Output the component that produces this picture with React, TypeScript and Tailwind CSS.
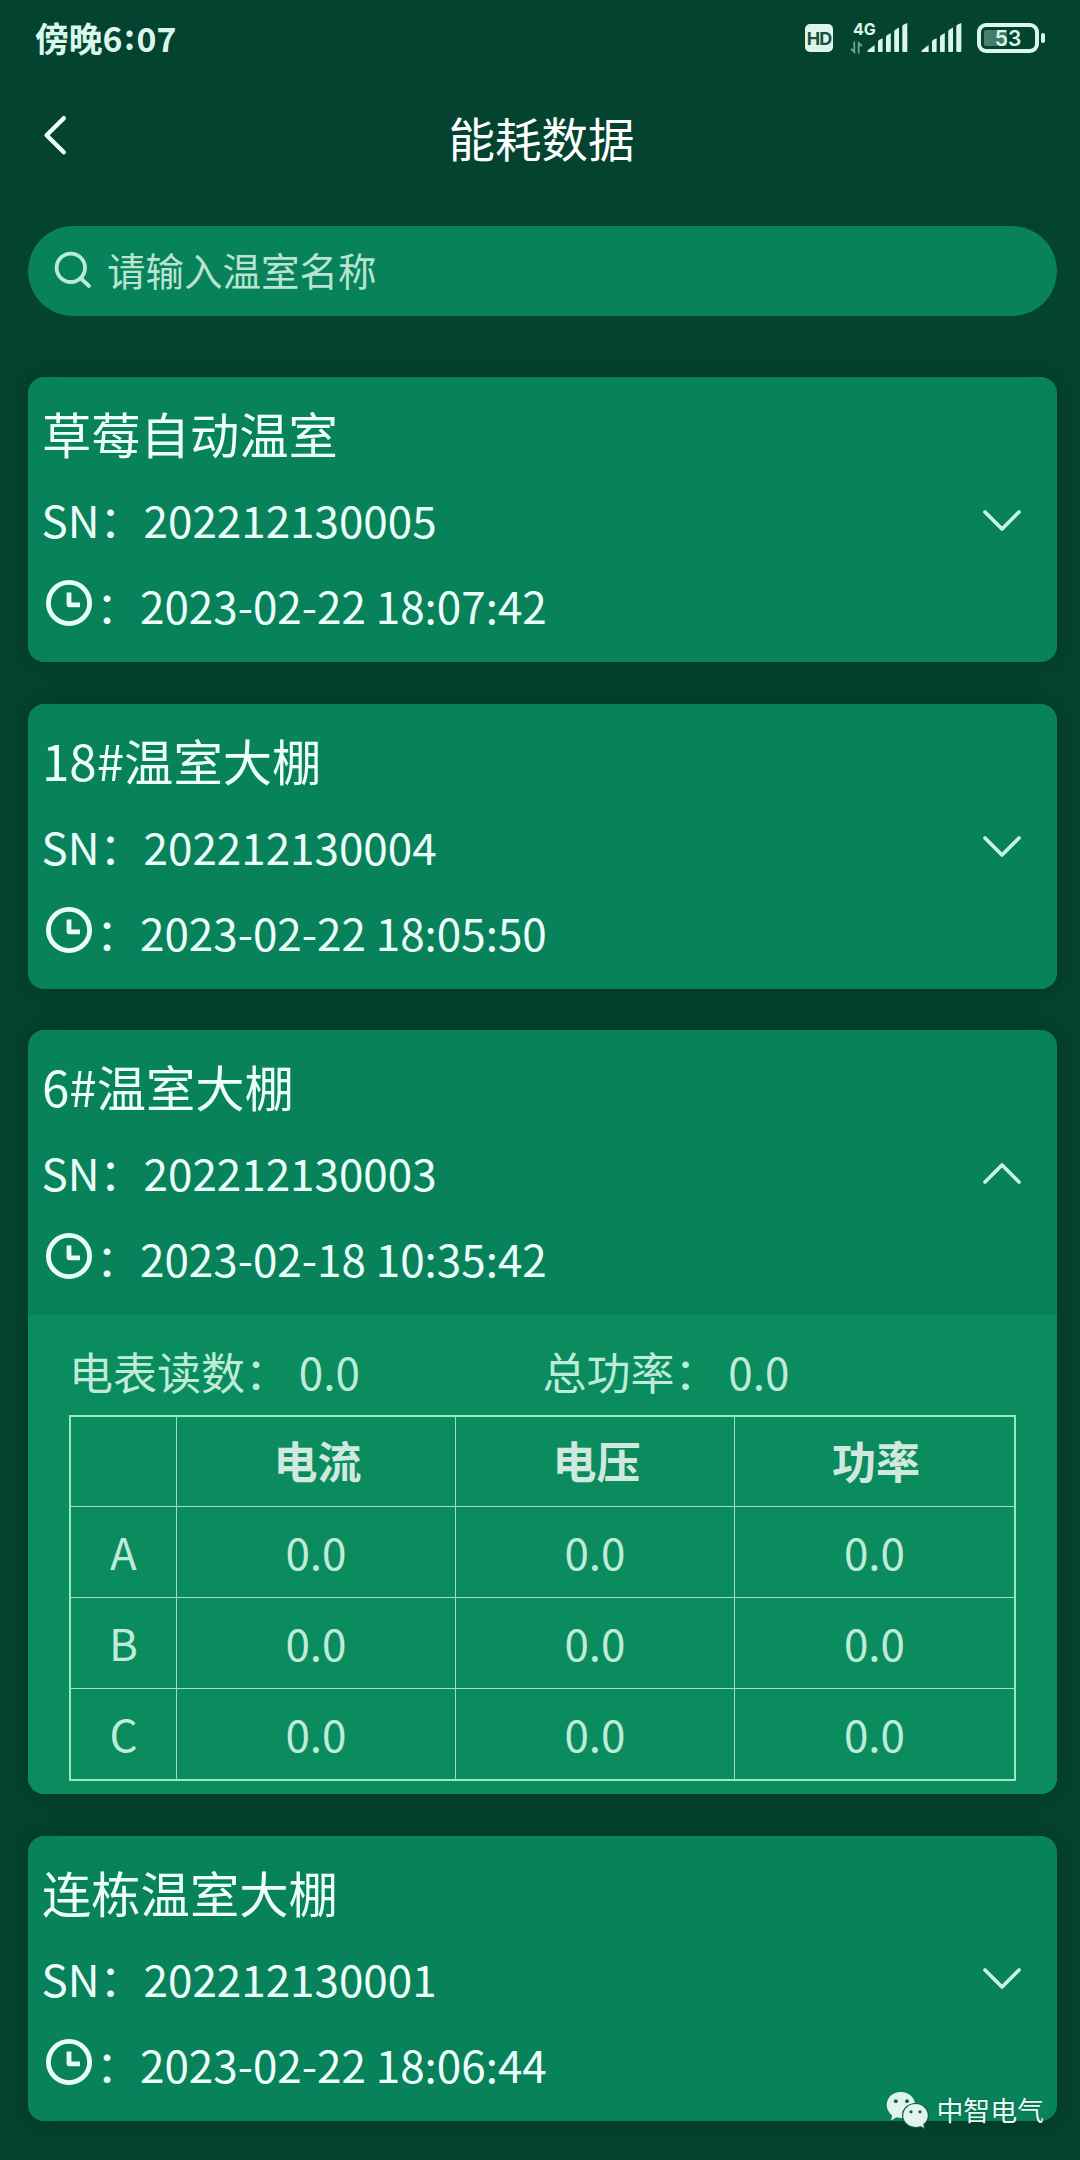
import React from "react";

type Greenhouse = {
  name: string;
  sn: string;
  time: string;
  detail?: { meter: string; total: string; rows: string[][] };
};

const greenhouses: Greenhouse[] = [
  { name: "草莓自动温室", sn: "202212130005", time: "2023-02-22 18:07:42" },
  { name: "18#温室大棚", sn: "202212130004", time: "2023-02-22 18:05:50" },
  {
    name: "6#温室大棚",
    sn: "202212130003",
    time: "2023-02-18 10:35:42",
    detail: {
      meter: "0.0",
      total: "0.0",
      rows: [
        ["A", "0.0", "0.0", "0.0"],
        ["B", "0.0", "0.0", "0.0"],
        ["C", "0.0", "0.0", "0.0"],
      ],
    },
  },
  { name: "连栋温室大棚", sn: "202212130001", time: "2023-02-22 18:06:44" },
];

function SignalBars() {
  return (
    <svg width="41" height="30" viewBox="0 0 41 30" fill="#d9f7ea">
      <path d="M0.5 27.6 7.6 22V29H1.2Q0 29 0.5 27.6Z" />
      <path d="M11 18.6Q11 17.6 12 17L15.6 15.2V28Q15.6 29 14.6 29H12Q11 29 11 28Z" />
      <path d="M19 13.8Q19 12.8 20 12.2L23.8 10V28Q23.8 29 22.8 29H20Q19 29 19 28Z" />
      <path d="M27.2 8.4Q27.2 7.4 28.2 6.8L32 4.6V28Q32 29 31 29H28.2Q27.2 29 27.2 28Z" />
      <path d="M35.3 3.4Q35.3 2.4 36.3 1.8L40.3 0V28Q40.3 29 39.3 29H36.3Q35.3 29 35.3 28Z" />
    </svg>
  );
}

function StatusBar() {
  return (
    <div className="flex h-[76px] items-center justify-between pr-[35px] pl-[35px]">
      <div className="flex items-center text-[33.8px] leading-[74px] font-bold text-[#d9f7ea]">
        <span>傍晚6</span>
        <span className="w-[14px] pb-[5px] text-center">:</span>
        <span>07</span>
      </div>
      <div className="flex items-center text-[#d9f7ea]">
        <div className="flex h-[28px] w-[28px] items-center justify-center rounded-[5px] bg-[#def5ea] font-['Inter'] text-[18px] font-bold tracking-[-1px] text-[#1a5240]">
          HD
        </div>
        <div className="ml-[17px] flex h-[32px] w-[27px] flex-col font-['Inter'] text-[16px] leading-[14px] font-bold">
          <span className="pl-[3px] whitespace-nowrap">4G</span>
          <svg className="mt-[5px]" width="13" height="13" viewBox="0 0 13 13" fill="none" stroke="#6fa48e" strokeWidth="1.8">
            <path d="M4.3 0.5V11L1 7.8M8.7 12.5V2L12 5.2" />
          </svg>
        </div>
        <div className="-ml-[10px]">
          <SignalBars />
        </div>
        <div className="ml-[13px]">
          <SignalBars />
        </div>
        <div className="ml-[15px] flex h-[30px] w-[62px] items-center justify-center rounded-[9px] border-4 border-[#d9f7ea] bg-[linear-gradient(90deg,#4f8571_0,#3a705b_26px,transparent_26px)] bg-clip-content p-[3px] font-['Inter'] text-[21px] leading-none font-semibold">
          53
        </div>
        <div className="ml-[2px] h-[10px] w-[4px] rounded-[2px] bg-[#d9f7ea]" />
      </div>
    </div>
  );
}

function Header() {
  return (
    <header className="grid h-[126px] grid-cols-[1fr_auto_1fr] pt-[25px] pl-[42px]">
      <svg className="mt-[13px]" width="25" height="42" viewBox="0 0 25 42" fill="none" stroke="#effff9" strokeWidth="4.4" strokeLinecap="round" strokeLinejoin="round">
        <path d="M21.8 4.2 4.6 21.2 21.8 38.2" />
      </svg>
      <h1 className="-ml-[39px] h-[72px] text-[46.5px] leading-[72px] text-white">能耗数据</h1>
    </header>
  );
}

function SearchBox() {
  return (
    <div className="mt-[24px] flex h-[90px] items-center rounded-full bg-[#08825b] pl-[26px]">
      <svg width="40" height="40" viewBox="0 0 40 40" fill="none" stroke="#b9ebd5" strokeWidth="3.8" strokeLinecap="round">
        <circle cx="16.8" cy="16.8" r="14.2" />
        <path d="M27 27.500 35 35" />
      </svg>
      <span className="ml-[13px] pb-[4px] text-[38.5px] leading-[86px] text-[#b9e4d1]">请输入温室名称</span>
    </div>
  );
}

function ClockIcon() {
  return (
    <svg className="mr-[4px] mb-[4px] ml-[4px]" width="46" height="46" viewBox="0 0 46 46" fill="none" stroke="#e8fff8" strokeWidth="4.8">
      <circle cx="23" cy="23" r="20.6" />
      <path d="M23 12.5V24.8H34" strokeLinejoin="round" />
    </svg>
  );
}

function Chevron({ up }: { up: boolean }) {
  return (
    <svg className={up ? "rotate-180" : "mt-[2px]"} width="42" height="26" viewBox="0 0 42 26" fill="none" stroke="#c8f5e3" strokeWidth="3.7" strokeLinecap="round" strokeLinejoin="round">
      <path d="M4 4 21 21 38 4" />
    </svg>
  );
}

function DetailPanel({ detail }: { detail: NonNullable<Greenhouse["detail"]> }) {
  return (
    <div className="h-[479px] rounded-b-[16px] bg-[#0a8c5f] pt-[13px] pr-[41px] pl-[41px] text-[44px] text-[#beecd9]">
      <div className="grid h-[87px] grid-cols-2 leading-[86px]">
        <span>电表读数： {detail.meter}</span>
        <span>总功率： {detail.total}</span>
      </div>
      <div className="grid h-[366px] grid-cols-[106px_279px_279px_1fr] grid-rows-[90px_91px_91px_90px] border-2 border-[#98e6c3]">
        {["", "电流", "电压", "功率"].map((title, i) => (
          <div
            key={i}
            className="border-r border-b border-[#a6dcc4] pl-[3px] text-center leading-[86px] font-bold text-[#d1e8de] [&:nth-child(4n)]:border-r-0"
          >
            {title}
          </div>
        ))}
        {detail.rows.flat().map((value, i) => (
          <div
            key={i}
            className="border-r border-b border-[#a6dcc4] text-center leading-[88px] [&:nth-child(4n)]:border-r-0 [&:nth-child(n+13)]:border-b-0"
          >
            {value}
          </div>
        ))}
      </div>
    </div>
  );
}

function Card({ item }: { item: Greenhouse }) {
  return (
    <section className="rounded-[16px] bg-[#08825b] text-[#ecfff9] shadow-[0_0_24px_rgba(0,0,0,0.22)]">
      <div className="flex h-[285px] items-center justify-between pr-[34px] pl-[14px]">
        <div className="flex h-full flex-col pt-[18px]">
          <h2 className="text-[49.3px] leading-[76px]">{item.name}</h2>
          <p className="-ml-[0.5px] text-[44px] leading-[97px]">SN：{item.sn}</p>
          <div className="flex h-[74px] items-center text-[44px] leading-[74px]">
            <ClockIcon />
            <span>：{item.time}</span>
          </div>
        </div>
        <Chevron up={!!item.detail} />
      </div>
      {item.detail && <DetailPanel detail={item.detail} />}
    </section>
  );
}

function Watermark() {
  return (
    <div className="absolute right-[36px] bottom-[30px] flex items-center gap-[7px] text-[#e9fbf4] [text-shadow:0_0_2px_rgba(0,40,28,0.6)]">
      <svg width="43" height="38" viewBox="0 0 43 38">
        <path
          d="M14.7 1C6.6 1 .7 6.9 .7 14c0 4.2 2.2 8 5.4 10.4L5 29.5l5.6-3.2c1.5.5 3 .7 4.6.7 8 0 14-5.8 14-13S22.8 1 14.7 1Z"
          fill="#e1f3eb"
        />
        <path
          d="M29.6 12.5c-7.2 0-13 5.2-13 12s5.8 12 13 12c1.7 0 3.3-.3 4.7-.8l4.7 2-1.2-4.3c2.8-2.1 4.6-5.3 4.6-8.9 0-6.8-5.7-12-12.8-12Z"
          fill="#e1f3eb"
          stroke="#0b5b41"
          strokeWidth="1.2"
        />
        <g fill="#0b6247">
          <circle cx="9.8" cy="10.2" r="1.9" />
          <circle cx="21" cy="10.2" r="1.9" />
          <circle cx="25" cy="20.8" r="1.6" />
          <circle cx="34" cy="20.8" r="1.6" />
        </g>
      </svg>
      <span className="text-[26.9px] leading-[40px]">中智电气</span>
    </div>
  );
}

export default function App() {
  return (
    <div className="relative h-[2160px] w-[1080px] overflow-hidden bg-[#04432f] font-['Noto_Sans_CJK_SC',sans-serif]">
      <StatusBar />
      <Header />
      <main className="pr-[23px] pl-[28px]">
        <SearchBox />
        <div className="mt-[61px] flex flex-col gap-[41.5px]">
          {greenhouses.map((item) => (
            <Card key={item.sn} item={item} />
          ))}
        </div>
      </main>
      <Watermark />
    </div>
  );
}
